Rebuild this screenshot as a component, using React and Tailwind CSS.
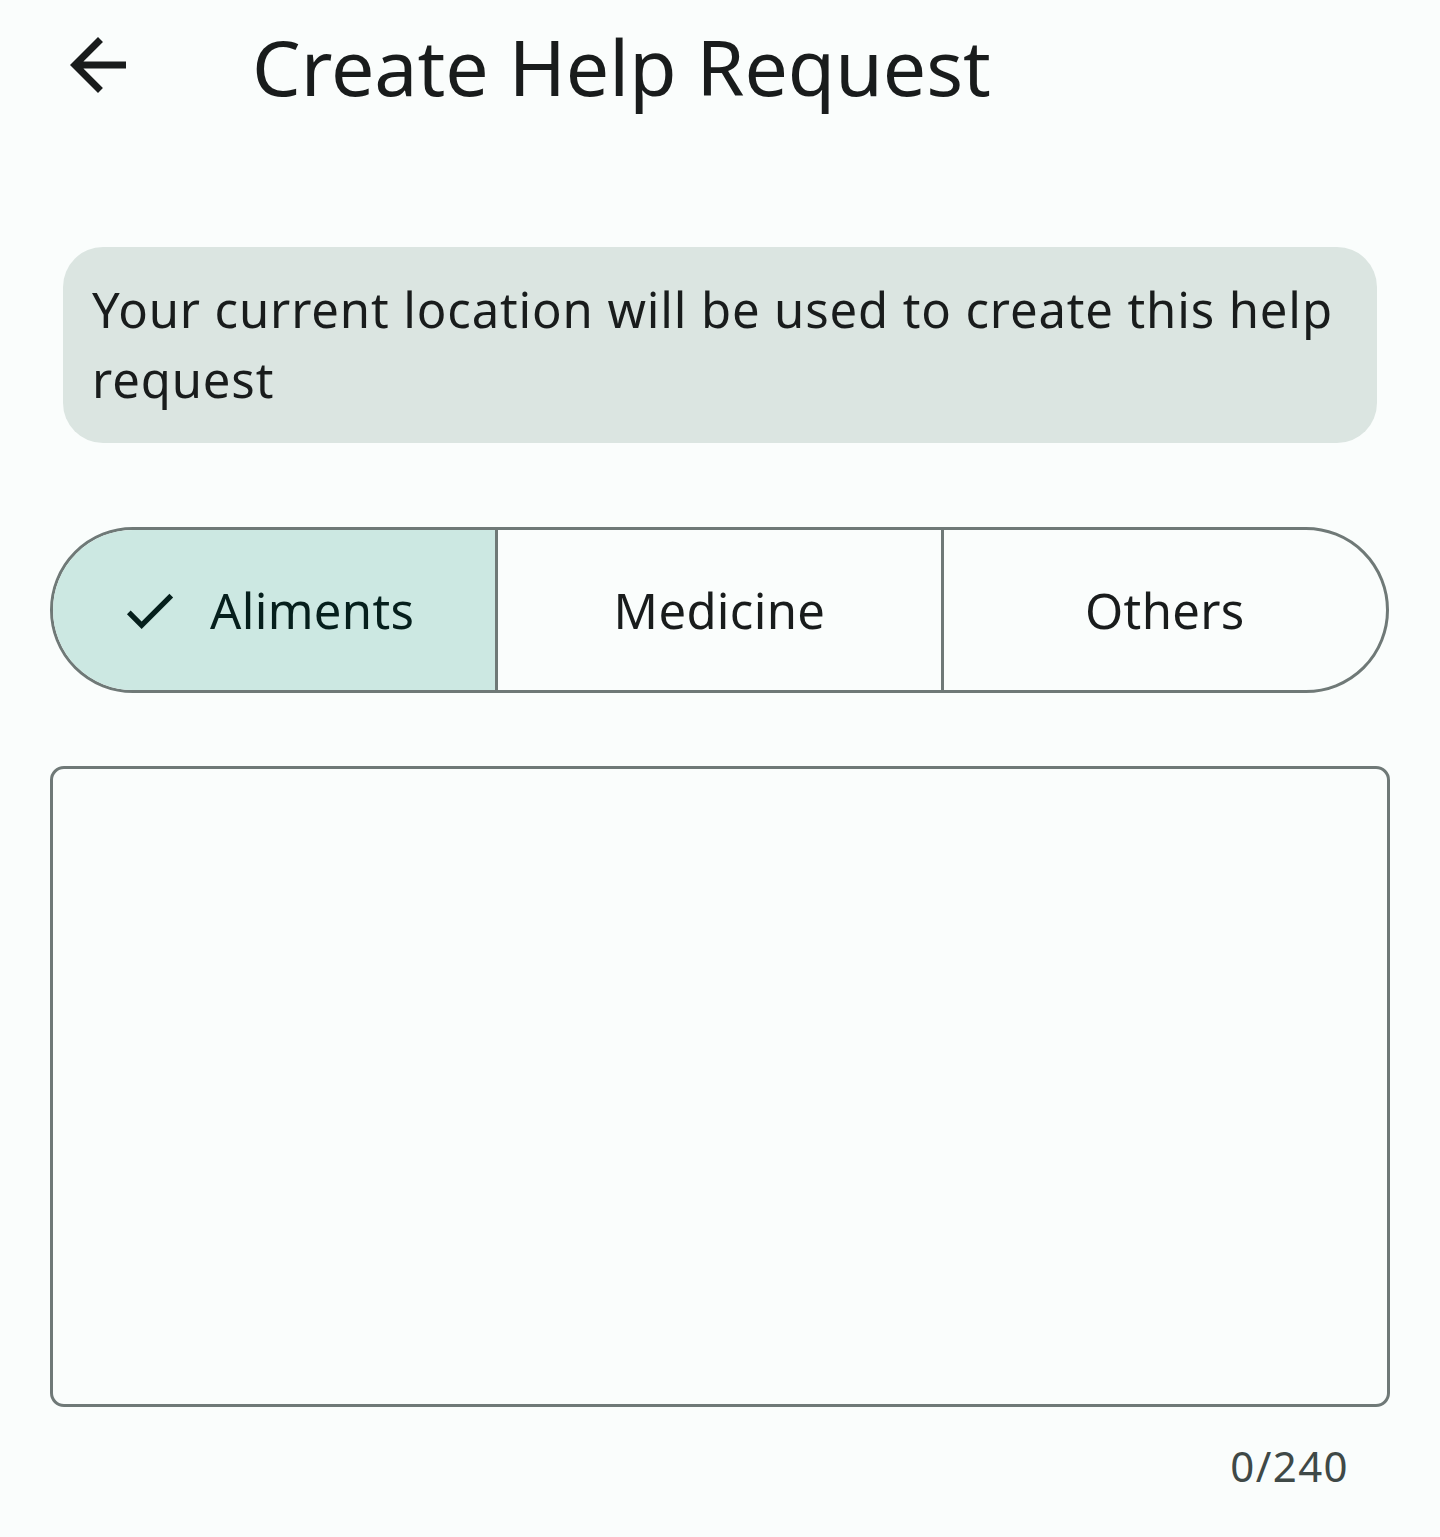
import React from "react";

export default function App() {
  const font = { fontFamily: '"Noto Sans", "Open Sans", sans-serif' };
  return (
    <div className="min-h-[1537px] w-full bg-[#fafdfc] text-[#191c1c]" style={font}>
      <header className="flex items-start pt-[18px] pl-[56px]">
        <button className="mt-[5px] flex h-[84px] w-[84px] items-center justify-center text-[#191c1c]">
          <svg viewBox="0 0 24 24" width="84" height="84" fill="currentColor">
            <path d="M20 11H7.83l5.59-5.59L12 4l-8 8 8 8 1.41-1.41L7.83 13H20v-2z" />
          </svg>
        </button>
        <h1 className="ml-[112px] text-[77px] leading-[98px] font-normal">Create Help Request</h1>
      </header>

      <div className="mx-[63px] mt-[131px] rounded-[40px] bg-[#dbe5e1] pt-[27px] pb-[29px] pl-[29px] pr-[20px] text-[49px] leading-[70px] tracking-[0.875px]">
        Your current location will be used to create this help request
      </div>

      <div className="ml-[50px] mr-[51px] mt-[84px] grid h-[166px] grid-cols-[1fr_3px_1fr_3px_1fr] overflow-hidden rounded-full border-[3px] border-[#6f7977]">
        <button className="flex items-center justify-center bg-[#cce8e2] text-[49px] leading-[70px] tracking-[0.35px] text-[#051f1c]">
          <span className="flex items-center pr-[16px]">
            <svg viewBox="0 0 24 24" width="63" height="63" fill="currentColor">
              <path d="M9 16.17L4.83 12l-1.42 1.41L9 19 21 7l-1.41-1.41z" />
            </svg>
            <span className="ml-[29px]">Aliments</span>
          </span>
        </button>
        <div className="bg-[#6f7977]" />
        <button className="flex items-center justify-center text-[49px] leading-[70px] tracking-[0.35px] text-[#191c1c]">
          Medicine
        </button>
        <div className="bg-[#6f7977]" />
        <button className="flex items-center justify-center text-[49px] leading-[70px] tracking-[0.35px] text-[#191c1c]">
          Others
        </button>
      </div>

      <div className="ml-[50px] mr-[50px] mt-[73px]">
        <textarea
          className="block h-[641px] w-full resize-none rounded-[14px] border-[3px] border-[#6f7977] bg-transparent p-[50px] text-[49px] leading-[70px] outline-none"
          style={font}
        />
        <div className="mt-[31px] pr-[41px] text-right text-[42px] leading-[56px] tracking-[1.4px] text-[#3f4947]">0/240</div>
      </div>
    </div>
  );
}
